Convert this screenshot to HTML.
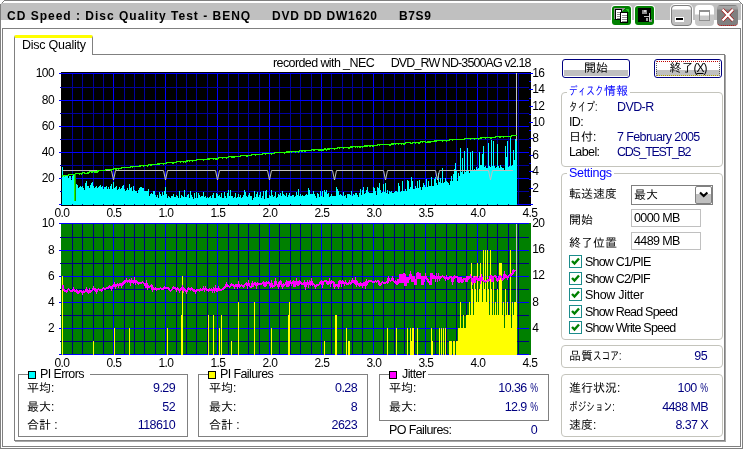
<!DOCTYPE html>
<html lang="ja">
<head>
<meta charset="utf-8">
<title>CD Speed : Disc Quality Test</title>
<style>
html,body{margin:0;padding:0;}
body{width:743px;height:449px;overflow:hidden;background:#fff;position:relative;
 font-family:"Liberation Sans","IPAGothic","Noto Sans CJK JP",sans-serif;font-size:12px;color:#000;}
.a{position:absolute;}
.g8{background:#808080;}
svg.charts{position:absolute;left:0;top:0;}
svg.charts text.ax{font-family:"Liberation Sans",sans-serif;font-size:12px;fill:#000;letter-spacing:-0.6px;}
.t{position:absolute;white-space:nowrap;line-height:14px;height:14px;}
.v{color:#000080;}
.l,.v{font-size:12.5px;letter-spacing:-0.6px;}
.r{text-align:right;}
.bl{color:#0000ff;}
.pc{display:inline-block;transform:scaleX(.7);transform-origin:100% 50%;margin-left:-2px;}
.k{display:inline-block;transform:scaleX(.72);transform-origin:0 50%;}
.gb{position:absolute;border:1px solid #c4c4bc;border-radius:4px;box-sizing:border-box;}
.sb{position:absolute;border:1px solid #808080;box-sizing:border-box;}
.lab{position:absolute;background:#fff;white-space:nowrap;line-height:10px;height:10px;}
.btn{position:absolute;box-sizing:border-box;border:1px solid #000080;border-radius:3px;background:#fff;text-align:center;line-height:16px;font-size:12px;}
.btn i{position:absolute;left:1px;right:1px;top:10px;height:6px;background:#c0c0c0;}
.btn span{position:relative;}
.inp{position:absolute;box-sizing:border-box;border:1px solid #c0c0c0;background:#fff;line-height:16px;padding-left:2px;font-size:12.5px;letter-spacing:-0.6px;}
.cb{position:absolute;width:13px;height:13px;box-sizing:border-box;border:1px solid #1c8c8c;background:#fff;}
.cb svg{position:absolute;left:1px;top:1px;}
.sq{position:absolute;width:8px;height:8px;box-sizing:border-box;border:1px solid #000;}
.t,.lab,.btn,.inp,svg.charts{will-change:transform;}
</style>
</head>
<body>
<!-- window frame -->
<div class="a g8" style="left:4px;top:0;width:735px;height:1px"></div>
<div class="a g8" style="left:0;top:4px;width:1px;height:445px"></div>
<div class="a g8" style="left:742px;top:4px;width:1px;height:445px"></div>
<div class="a g8" style="left:0;top:448px;width:743px;height:1px"></div>
<div class="a g8" style="left:3px;top:1px;width:1px;height:1px"></div>
<div class="a g8" style="left:2px;top:2px;width:1px;height:1px"></div>
<div class="a g8" style="left:1px;top:3px;width:1px;height:1px"></div>
<div class="a g8" style="left:739px;top:1px;width:1px;height:1px"></div>
<div class="a g8" style="left:740px;top:2px;width:1px;height:1px"></div>
<div class="a g8" style="left:741px;top:3px;width:1px;height:1px"></div>
<!-- title bar -->
<div class="a" style="left:1px;top:3px;width:740px;height:17px;background:#c0c0c0"></div>
<div class="t" style="left:6.5px;top:9px;font-weight:bold;font-size:12px;letter-spacing:1px">CD Speed : Disc Quality Test - BENQ</div>
<div class="t" style="left:271.5px;top:9px;font-weight:bold;font-size:12px;letter-spacing:0.75px">DVD DD DW1620</div>
<div class="t" style="left:398.8px;top:9px;font-weight:bold;font-size:12px;letter-spacing:0.6px">B7S9</div>
<!-- title buttons -->
<div class="a" style="left:612px;top:6px;width:19px;height:19px;background:#008000;border-radius:3px;box-shadow:0 0 0 1px #fff"></div>
<svg class="a" style="left:612px;top:6px" width="19" height="19" viewBox="0 0 19 19" shape-rendering="crispEdges"><path d="M2 2h12L2 13z" fill="#909090"/><path d="M13 3h4v3z" fill="#20c020"/><rect x="3.5" y="3.5" width="6" height="10" fill="#fff" stroke="#000"/><path d="M5 6h4M5 8h4M5 10h4M5 12h4" stroke="#909090"/><rect x="8.5" y="6.5" width="7" height="10" fill="#fff" stroke="#000"/><path d="M10 9h5M10 11h5M10 13h5M10 15h5" stroke="#909090"/></svg>
<div class="a" style="left:635px;top:6px;width:19px;height:19px;background:#008000;border-radius:3px;box-shadow:0 0 0 1px #fff"></div>
<svg class="a" style="left:635px;top:6px" width="19" height="19" viewBox="0 0 19 19" shape-rendering="crispEdges"><rect x="3" y="2" width="13" height="14" fill="#000"/><rect x="7" y="4" width="5" height="4" fill="#909090"/><rect x="9" y="4" width="2" height="2" fill="#d0d0d0"/><rect x="14" y="7" width="1" height="8" fill="#d0d0d0"/><rect x="9" y="10" width="5" height="1" fill="#c0c0c0"/><rect x="11" y="12" width="2" height="3" fill="#a0a0a0"/><path d="M13 16h4v-4z" fill="#909090"/></svg>
<div class="a" style="left:671px;top:5px;width:21px;height:21px;box-sizing:border-box;border:1px solid #808080;border-radius:4px;background:linear-gradient(#fff 0,#fff 3px,#c0c0c0 4px,#c0c0c0 100%);box-shadow:0 0 0 1px #fff"></div>
<div class="a" style="left:675px;top:17px;width:9px;height:5px;background:#fff"></div>
<div class="a" style="left:676px;top:18px;width:7px;height:2px;background:#000"></div>
<div class="a" style="left:695px;top:5px;width:19px;height:21px;border-radius:4px;background:linear-gradient(#fff 0,#fff 9px,#c8c8c8 10px,#c8c8c8 100%)"></div>
<div class="a" style="left:699px;top:10px;width:11px;height:11px;box-sizing:border-box;border:1px solid #909090;border-top:2px solid #909090;background:linear-gradient(#fff 0,#fff 3px,#c8c8c8 4px,#c8c8c8 100%)"></div>
<div class="a" style="left:717px;top:5px;width:21px;height:21px;box-sizing:border-box;border-radius:4px;background:linear-gradient(#808080 0,#808080 1px,#a8a8a8 1px,#a0a0a0 4px,#808080 5px,#808080 100%);border-bottom:1px dotted #c00000"></div>
<svg class="a" style="left:717px;top:5px" width="21" height="21" viewBox="0 0 21 21"><path d="M5.5 4.5L16 15.5M16 4.5L5.5 15.5" stroke="#a00000" stroke-width="3.4"/><path d="M5.5 4.5L16 15.5M16 4.5L5.5 15.5" stroke="#fff" stroke-width="2.4"/></svg>
<!-- inner frame -->
<div class="a" style="left:2px;top:28px;width:739px;height:419px;box-sizing:border-box;border:1px solid #808080"></div>
<!-- tab panel -->
<div class="a" style="left:14px;top:54px;width:711px;height:387px;box-sizing:border-box;border:1px solid #808080"></div>
<div class="a" style="left:725px;top:55px;width:1px;height:387px;background:#a8a8a8"></div>
<div class="a" style="left:15px;top:441px;width:711px;height:1px;background:#a8a8a8"></div>
<div class="a" style="left:14px;top:35px;width:79px;height:20px;box-sizing:border-box;background:#fff;border-left:1px solid #808080;border-right:1px solid #808080;border-top:3px solid #ffff00;border-radius:2px 2px 0 0"></div>
<div class="t l" style="left:22px;top:38px;letter-spacing:-0.25px">Disc Quality</div>
<div class="t l" style="left:273px;top:56px">recorded with _NEC</div>
<div class="t l r" style="left:380px;width:150.5px;top:56px;letter-spacing:-0.9px">DVD_RW ND-3500AG v2.18</div>
<svg class="charts" width="743" height="449" viewBox="0 0 743 449" shape-rendering="crispEdges"><rect x="61" y="72" width="470" height="134" fill="#000"/>
<rect x="72" y="73" width="1" height="132" fill="#00009c"/>
<rect x="82" y="73" width="1" height="132" fill="#00009c"/>
<rect x="93" y="73" width="1" height="132" fill="#00009c"/>
<rect x="103" y="73" width="1" height="132" fill="#00009c"/>
<rect x="113" y="73" width="1" height="132" fill="#0000ff"/>
<rect x="124" y="73" width="1" height="132" fill="#00009c"/>
<rect x="134" y="73" width="1" height="132" fill="#00009c"/>
<rect x="144" y="73" width="1" height="132" fill="#00009c"/>
<rect x="155" y="73" width="1" height="132" fill="#00009c"/>
<rect x="165" y="73" width="1" height="132" fill="#0000ff"/>
<rect x="176" y="73" width="1" height="132" fill="#00009c"/>
<rect x="186" y="73" width="1" height="132" fill="#00009c"/>
<rect x="196" y="73" width="1" height="132" fill="#00009c"/>
<rect x="207" y="73" width="1" height="132" fill="#00009c"/>
<rect x="217" y="73" width="1" height="132" fill="#0000ff"/>
<rect x="228" y="73" width="1" height="132" fill="#00009c"/>
<rect x="238" y="73" width="1" height="132" fill="#00009c"/>
<rect x="248" y="73" width="1" height="132" fill="#00009c"/>
<rect x="259" y="73" width="1" height="132" fill="#00009c"/>
<rect x="269" y="73" width="1" height="132" fill="#0000ff"/>
<rect x="279" y="73" width="1" height="132" fill="#00009c"/>
<rect x="290" y="73" width="1" height="132" fill="#00009c"/>
<rect x="300" y="73" width="1" height="132" fill="#00009c"/>
<rect x="311" y="73" width="1" height="132" fill="#00009c"/>
<rect x="321" y="73" width="1" height="132" fill="#0000ff"/>
<rect x="331" y="73" width="1" height="132" fill="#00009c"/>
<rect x="342" y="73" width="1" height="132" fill="#00009c"/>
<rect x="352" y="73" width="1" height="132" fill="#00009c"/>
<rect x="362" y="73" width="1" height="132" fill="#00009c"/>
<rect x="373" y="73" width="1" height="132" fill="#0000ff"/>
<rect x="383" y="73" width="1" height="132" fill="#00009c"/>
<rect x="394" y="73" width="1" height="132" fill="#00009c"/>
<rect x="404" y="73" width="1" height="132" fill="#00009c"/>
<rect x="414" y="73" width="1" height="132" fill="#00009c"/>
<rect x="425" y="73" width="1" height="132" fill="#0000ff"/>
<rect x="435" y="73" width="1" height="132" fill="#00009c"/>
<rect x="446" y="73" width="1" height="132" fill="#00009c"/>
<rect x="456" y="73" width="1" height="132" fill="#00009c"/>
<rect x="466" y="73" width="1" height="132" fill="#00009c"/>
<rect x="477" y="73" width="1" height="132" fill="#0000ff"/>
<rect x="487" y="73" width="1" height="132" fill="#00009c"/>
<rect x="497" y="73" width="1" height="132" fill="#00009c"/>
<rect x="508" y="73" width="1" height="132" fill="#00009c"/>
<rect x="518" y="73" width="1" height="132" fill="#00009c"/>
<rect x="59" y="73" width="470" height="1" fill="#0000ff"/>
<rect x="60" y="87" width="469" height="1" fill="#00009c"/>
<rect x="59" y="100" width="470" height="1" fill="#0000ff"/>
<rect x="60" y="113" width="469" height="1" fill="#00009c"/>
<rect x="59" y="126" width="470" height="1" fill="#0000ff"/>
<rect x="60" y="139" width="469" height="1" fill="#00009c"/>
<rect x="59" y="152" width="470" height="1" fill="#0000ff"/>
<rect x="60" y="165" width="469" height="1" fill="#00009c"/>
<rect x="59" y="178" width="470" height="1" fill="#0000ff"/>
<rect x="60" y="191" width="469" height="1" fill="#00009c"/>
<rect x="59" y="204" width="470" height="1" fill="#0000ff"/>
<rect x="59" y="204" width="474" height="1" fill="#0000ff"/>
<path d="M62,205 V167 h1 V176 h1 V176 h1 V176 h1 V176 h1 V176 h1 V178 h1 V176 h1 V176 h1 V180 h1 V176 h1 V175 h1 V176 h1 V176 h1 V184 h1 V185 h1 V188 h1 V187 h1 V186 h1 V187 h1 V186 h1 V188 h1 V190 h1 V183 h1 V181 h1 V186 h1 V186 h1 V188 h1 V185 h1 V183 h1 V182 h1 V186 h1 V188 h1 V187 h1 V186 h1 V188 h1 V187 h1 V186 h1 V185 h1 V187 h1 V186 h1 V189 h1 V187 h1 V187 h1 V186 h1 V189 h1 V187 h1 V189 h1 V186 h1 V184 h1 V189 h1 V182 h1 V188 h1 V187 h1 V186 h1 V190 h1 V189 h1 V187 h1 V189 h1 V188 h1 V186 h1 V185 h1 V189 h1 V191 h1 V190 h1 V188 h1 V190 h1 V184 h1 V188 h1 V187 h1 V191 h1 V186 h1 V190 h1 V191 h1 V191 h1 V193 h1 V190 h1 V188 h1 V187 h1 V187 h1 V188 h1 V188 h1 V191 h1 V191 h1 V191 h1 V191 h1 V189 h1 V196 h1 V194 h1 V193 h1 V194 h1 V191 h1 V191 h1 V195 h1 V197 h1 V195 h1 V198 h1 V192 h1 V194 h1 V196 h1 V192 h1 V195 h1 V191 h1 V187 h1 V194 h1 V198 h1 V196 h1 V197 h1 V198 h1 V196 h1 V196 h1 V194 h1 V197 h1 V197 h1 V195 h1 V196 h1 V198 h1 V191 h1 V198 h1 V195 h1 V196 h1 V197 h1 V190 h1 V197 h1 V197 h1 V195 h1 V194 h1 V198 h1 V191 h1 V195 h1 V197 h1 V199 h1 V193 h1 V198 h1 V192 h1 V198 h1 V193 h1 V195 h1 V197 h1 V196 h1 V196 h1 V192 h1 V197 h1 V196 h1 V198 h1 V197 h1 V198 h1 V197 h1 V196 h1 V198 h1 V195 h1 V193 h1 V198 h1 V198 h1 V193 h1 V194 h1 V196 h1 V195 h1 V197 h1 V193 h1 V198 h1 V198 h1 V192 h1 V196 h1 V198 h1 V193 h1 V190 h1 V196 h1 V190 h1 V196 h1 V196 h1 V198 h1 V197 h1 V193 h1 V198 h1 V197 h1 V194 h1 V197 h1 V195 h1 V198 h1 V197 h1 V195 h1 V190 h1 V192 h1 V196 h1 V197 h1 V195 h1 V193 h1 V196 h1 V196 h1 V200 h1 V198 h1 V191 h1 V197 h1 V194 h1 V192 h1 V197 h1 V195 h1 V192 h1 V198 h1 V196 h1 V191 h1 V199 h1 V191 h1 V190 h1 V198 h1 V198 h1 V195 h1 V196 h1 V190 h1 V195 h1 V197 h1 V196 h1 V192 h1 V198 h1 V197 h1 V194 h1 V195 h1 V193 h1 V196 h1 V191 h1 V194 h1 V195 h1 V196 h1 V193 h1 V197 h1 V195 h1 V193 h1 V196 h1 V196 h1 V195 h1 V195 h1 V197 h1 V196 h1 V192 h1 V195 h1 V189 h1 V196 h1 V194 h1 V196 h1 V195 h1 V196 h1 V196 h1 V195 h1 V194 h1 V195 h1 V188 h1 V190 h1 V194 h1 V194 h1 V194 h1 V191 h1 V194 h1 V196 h1 V198 h1 V193 h1 V194 h1 V197 h1 V191 h1 V196 h1 V191 h1 V197 h1 V190 h1 V192 h1 V190 h1 V194 h1 V193 h1 V197 h1 V196 h1 V194 h1 V196 h1 V196 h1 V196 h1 V196 h1 V187 h1 V189 h1 V191 h1 V195 h1 V194 h1 V195 h1 V196 h1 V192 h1 V196 h1 V195 h1 V198 h1 V194 h1 V194 h1 V194 h1 V195 h1 V191 h1 V196 h1 V194 h1 V195 h1 V193 h1 V193 h1 V195 h1 V197 h1 V193 h1 V189 h1 V195 h1 V190 h1 V187 h1 V194 h1 V193 h1 V190 h1 V187 h1 V192 h1 V193 h1 V193 h1 V193 h1 V193 h1 V187 h1 V188 h1 V191 h1 V195 h1 V187 h1 V188 h1 V183 h1 V190 h1 V193 h1 V192 h1 V184 h1 V192 h1 V183 h1 V193 h1 V190 h1 V194 h1 V191 h1 V192 h1 V191 h1 V193 h1 V193 h1 V192 h1 V191 h1 V191 h1 V192 h1 V183 h1 V186 h1 V192 h1 V191 h1 V181 h1 V191 h1 V191 h1 V189 h1 V191 h1 V180 h1 V181 h1 V189 h1 V187 h1 V177 h1 V181 h1 V189 h1 V189 h1 V186 h1 V188 h1 V181 h1 V188 h1 V180 h1 V187 h1 V190 h1 V187 h1 V183 h1 V185 h1 V187 h1 V179 h1 V187 h1 V181 h1 V186 h1 V186 h1 V177 h1 V186 h1 V186 h1 V179 h1 V177 h1 V183 h1 V185 h1 V173 h1 V182 h1 V178 h1 V183 h1 V168 h1 V183 h1 V182 h1 V178 h1 V181 h1 V182 h1 V183 h1 V185 h1 V181 h1 V176 h1 V181 h1 V174 h1 V169 h1 V163 h1 V170 h1 V181 h1 V173 h1 V176 h1 V148 h1 V172 h1 V158 h1 V174 h1 V151 h1 V172 h1 V171 h1 V148 h1 V170 h1 V173 h1 V152 h1 V170 h1 V151 h1 V170 h1 V169 h1 V170 h1 V167 h1 V169 h1 V168 h1 V152 h1 V165 h1 V165 h1 V154 h1 V146 h1 V167 h1 V166 h1 V168 h1 V168 h1 V143 h1 V166 h1 V167 h1 V140 h1 V166 h1 V141 h1 V166 h1 V168 h1 V167 h1 V144 h1 V166 h1 V168 h1 V165 h1 V167 h1 V168 h1 V168 h1 V170 h1 V146 h1 V157 h1 V141 h1 V167 h1 V166 h1 V136 h1 V166 h1 V165 h1 V150 h1 V160 h1 V139 h1 V139 h1 V205 Z" fill="#00ffff"/>
<rect x="72" y="204" width="1" height="1" fill="#00009c"/>
<rect x="82" y="204" width="1" height="1" fill="#00009c"/>
<rect x="93" y="204" width="1" height="1" fill="#00009c"/>
<rect x="103" y="204" width="1" height="1" fill="#00009c"/>
<rect x="113" y="204" width="1" height="1" fill="#00009c"/>
<rect x="124" y="204" width="1" height="1" fill="#00009c"/>
<rect x="134" y="204" width="1" height="1" fill="#00009c"/>
<rect x="144" y="204" width="1" height="1" fill="#00009c"/>
<rect x="155" y="204" width="1" height="1" fill="#00009c"/>
<rect x="165" y="204" width="1" height="1" fill="#00009c"/>
<rect x="176" y="204" width="1" height="1" fill="#00009c"/>
<rect x="186" y="204" width="1" height="1" fill="#00009c"/>
<rect x="196" y="204" width="1" height="1" fill="#00009c"/>
<rect x="207" y="204" width="1" height="1" fill="#00009c"/>
<rect x="217" y="204" width="1" height="1" fill="#00009c"/>
<rect x="228" y="204" width="1" height="1" fill="#00009c"/>
<rect x="238" y="204" width="1" height="1" fill="#00009c"/>
<rect x="248" y="204" width="1" height="1" fill="#00009c"/>
<rect x="259" y="204" width="1" height="1" fill="#00009c"/>
<rect x="269" y="204" width="1" height="1" fill="#00009c"/>
<rect x="279" y="204" width="1" height="1" fill="#00009c"/>
<rect x="290" y="204" width="1" height="1" fill="#00009c"/>
<rect x="300" y="204" width="1" height="1" fill="#00009c"/>
<rect x="311" y="204" width="1" height="1" fill="#00009c"/>
<rect x="321" y="204" width="1" height="1" fill="#00009c"/>
<rect x="331" y="204" width="1" height="1" fill="#00009c"/>
<rect x="342" y="204" width="1" height="1" fill="#00009c"/>
<rect x="352" y="204" width="1" height="1" fill="#00009c"/>
<rect x="362" y="204" width="1" height="1" fill="#00009c"/>
<rect x="373" y="204" width="1" height="1" fill="#00009c"/>
<rect x="383" y="204" width="1" height="1" fill="#00009c"/>
<rect x="394" y="204" width="1" height="1" fill="#00009c"/>
<rect x="404" y="204" width="1" height="1" fill="#00009c"/>
<rect x="414" y="204" width="1" height="1" fill="#00009c"/>
<rect x="425" y="204" width="1" height="1" fill="#00009c"/>
<rect x="435" y="204" width="1" height="1" fill="#00009c"/>
<rect x="446" y="204" width="1" height="1" fill="#00009c"/>
<rect x="456" y="204" width="1" height="1" fill="#00009c"/>
<rect x="466" y="204" width="1" height="1" fill="#00009c"/>
<rect x="477" y="204" width="1" height="1" fill="#00009c"/>
<rect x="487" y="204" width="1" height="1" fill="#00009c"/>
<rect x="497" y="204" width="1" height="1" fill="#00009c"/>
<rect x="508" y="204" width="1" height="1" fill="#00009c"/>
<path d="M62.5,170.5 L111.5,170.5 L113.5,180 L115.5,170.5 L163.5,170.5 L165.5,180 L167.5,170.5 L215.5,170.5 L217.5,180 L219.5,170.5 L267.5,170.5 L269.5,180 L271.5,170.5 L332.5,170.5 L334.5,180 L336.5,170.5 L383.5,170.5 L385.5,180 L387.5,170.5 L435.5,170.5 L437.5,180 L439.5,170.5 L488.5,170.5 L490.5,180 L492.5,170.5 L513,170.5" fill="none" stroke="#c0c0c0" stroke-width="1" shape-rendering="auto"/>
<rect x="516" y="73" width="1" height="68" fill="#c0c0c0"/>
<rect x="62" y="175" width="1" height="1" fill="#20ff00"/>
<rect x="62" y="176" width="1" height="1" fill="#20ff00"/>
<rect x="63" y="175" width="1" height="1" fill="#20ff00"/>
<rect x="64" y="175" width="1" height="1" fill="#20ff00"/>
<rect x="64" y="176" width="1" height="1" fill="#20ff00"/>
<rect x="65" y="175" width="1" height="1" fill="#20ff00"/>
<rect x="66" y="175" width="1" height="1" fill="#20ff00"/>
<rect x="67" y="175" width="1" height="1" fill="#20ff00"/>
<rect x="68" y="174" width="1" height="2" fill="#20ff00"/>
<rect x="69" y="174" width="1" height="1" fill="#20ff00"/>
<rect x="70" y="174" width="1" height="1" fill="#20ff00"/>
<rect x="71" y="174" width="1" height="1" fill="#20ff00"/>
<rect x="72" y="174" width="1" height="1" fill="#20ff00"/>
<rect x="73" y="174" width="1" height="1" fill="#20ff00"/>
<rect x="74" y="174" width="1" height="1" fill="#20ff00"/>
<rect x="75" y="173" width="1" height="2" fill="#20ff00"/>
<rect x="76" y="173" width="1" height="1" fill="#20ff00"/>
<rect x="77" y="173" width="1" height="1" fill="#20ff00"/>
<rect x="78" y="173" width="1" height="1" fill="#20ff00"/>
<rect x="79" y="173" width="1" height="1" fill="#20ff00"/>
<rect x="79" y="174" width="1" height="1" fill="#20ff00"/>
<rect x="80" y="173" width="1" height="1" fill="#20ff00"/>
<rect x="81" y="173" width="1" height="1" fill="#20ff00"/>
<rect x="81" y="174" width="1" height="1" fill="#20ff00"/>
<rect x="82" y="172" width="1" height="2" fill="#20ff00"/>
<rect x="82" y="173" width="1" height="1" fill="#20ff00"/>
<rect x="83" y="172" width="1" height="1" fill="#20ff00"/>
<rect x="84" y="172" width="1" height="2" fill="#20ff00"/>
<rect x="85" y="173" width="1" height="1" fill="#20ff00"/>
<rect x="86" y="173" width="1" height="1" fill="#20ff00"/>
<rect x="87" y="172" width="1" height="2" fill="#20ff00"/>
<rect x="88" y="172" width="1" height="1" fill="#20ff00"/>
<rect x="88" y="173" width="1" height="1" fill="#20ff00"/>
<rect x="89" y="171" width="1" height="2" fill="#20ff00"/>
<rect x="89" y="172" width="1" height="1" fill="#20ff00"/>
<rect x="90" y="171" width="1" height="1" fill="#20ff00"/>
<rect x="91" y="171" width="1" height="2" fill="#20ff00"/>
<rect x="92" y="171" width="1" height="2" fill="#20ff00"/>
<rect x="93" y="171" width="1" height="1" fill="#20ff00"/>
<rect x="94" y="171" width="1" height="1" fill="#20ff00"/>
<rect x="94" y="172" width="1" height="1" fill="#20ff00"/>
<rect x="95" y="171" width="1" height="1" fill="#20ff00"/>
<rect x="95" y="172" width="1" height="1" fill="#20ff00"/>
<rect x="96" y="171" width="1" height="2" fill="#20ff00"/>
<rect x="97" y="170" width="1" height="3" fill="#20ff00"/>
<rect x="98" y="170" width="1" height="1" fill="#20ff00"/>
<rect x="98" y="171" width="1" height="1" fill="#20ff00"/>
<rect x="99" y="170" width="1" height="1" fill="#20ff00"/>
<rect x="100" y="170" width="1" height="1" fill="#20ff00"/>
<rect x="101" y="170" width="1" height="1" fill="#20ff00"/>
<rect x="102" y="170" width="1" height="1" fill="#20ff00"/>
<rect x="103" y="170" width="1" height="1" fill="#20ff00"/>
<rect x="104" y="170" width="1" height="1" fill="#20ff00"/>
<rect x="105" y="169" width="1" height="2" fill="#20ff00"/>
<rect x="106" y="169" width="1" height="1" fill="#20ff00"/>
<rect x="107" y="169" width="1" height="1" fill="#20ff00"/>
<rect x="108" y="169" width="1" height="1" fill="#20ff00"/>
<rect x="109" y="169" width="1" height="1" fill="#20ff00"/>
<rect x="110" y="169" width="1" height="2" fill="#20ff00"/>
<rect x="111" y="169" width="1" height="2" fill="#20ff00"/>
<rect x="112" y="169" width="1" height="1" fill="#20ff00"/>
<rect x="113" y="168" width="1" height="2" fill="#20ff00"/>
<rect x="114" y="168" width="1" height="1" fill="#20ff00"/>
<rect x="115" y="168" width="1" height="2" fill="#20ff00"/>
<rect x="115" y="169" width="1" height="1" fill="#20ff00"/>
<rect x="116" y="168" width="1" height="2" fill="#20ff00"/>
<rect x="117" y="168" width="1" height="1" fill="#20ff00"/>
<rect x="118" y="168" width="1" height="1" fill="#20ff00"/>
<rect x="118" y="169" width="1" height="1" fill="#20ff00"/>
<rect x="119" y="168" width="1" height="1" fill="#20ff00"/>
<rect x="120" y="168" width="1" height="1" fill="#20ff00"/>
<rect x="121" y="167" width="1" height="2" fill="#20ff00"/>
<rect x="122" y="167" width="1" height="1" fill="#20ff00"/>
<rect x="123" y="167" width="1" height="1" fill="#20ff00"/>
<rect x="124" y="167" width="1" height="1" fill="#20ff00"/>
<rect x="125" y="167" width="1" height="1" fill="#20ff00"/>
<rect x="126" y="167" width="1" height="1" fill="#20ff00"/>
<rect x="127" y="167" width="1" height="1" fill="#20ff00"/>
<rect x="128" y="167" width="1" height="1" fill="#20ff00"/>
<rect x="129" y="167" width="1" height="1" fill="#20ff00"/>
<rect x="130" y="166" width="1" height="2" fill="#20ff00"/>
<rect x="130" y="167" width="1" height="1" fill="#20ff00"/>
<rect x="131" y="166" width="1" height="1" fill="#20ff00"/>
<rect x="132" y="166" width="1" height="1" fill="#20ff00"/>
<rect x="132" y="167" width="1" height="1" fill="#20ff00"/>
<rect x="133" y="166" width="1" height="1" fill="#20ff00"/>
<rect x="134" y="166" width="1" height="1" fill="#20ff00"/>
<rect x="135" y="166" width="1" height="1" fill="#20ff00"/>
<rect x="136" y="166" width="1" height="1" fill="#20ff00"/>
<rect x="137" y="166" width="1" height="1" fill="#20ff00"/>
<rect x="138" y="166" width="1" height="1" fill="#20ff00"/>
<rect x="139" y="165" width="1" height="2" fill="#20ff00"/>
<rect x="140" y="165" width="1" height="1" fill="#20ff00"/>
<rect x="140" y="166" width="1" height="1" fill="#20ff00"/>
<rect x="141" y="165" width="1" height="1" fill="#20ff00"/>
<rect x="142" y="165" width="1" height="1" fill="#20ff00"/>
<rect x="143" y="165" width="1" height="1" fill="#20ff00"/>
<rect x="143" y="166" width="1" height="1" fill="#20ff00"/>
<rect x="144" y="165" width="1" height="1" fill="#20ff00"/>
<rect x="145" y="165" width="1" height="1" fill="#20ff00"/>
<rect x="146" y="165" width="1" height="1" fill="#20ff00"/>
<rect x="147" y="165" width="1" height="1" fill="#20ff00"/>
<rect x="147" y="166" width="1" height="1" fill="#20ff00"/>
<rect x="148" y="164" width="1" height="2" fill="#20ff00"/>
<rect x="149" y="164" width="1" height="1" fill="#20ff00"/>
<rect x="150" y="164" width="1" height="2" fill="#20ff00"/>
<rect x="151" y="164" width="1" height="2" fill="#20ff00"/>
<rect x="152" y="164" width="1" height="1" fill="#20ff00"/>
<rect x="153" y="164" width="1" height="1" fill="#20ff00"/>
<rect x="154" y="164" width="1" height="1" fill="#20ff00"/>
<rect x="155" y="164" width="1" height="1" fill="#20ff00"/>
<rect x="156" y="164" width="1" height="1" fill="#20ff00"/>
<rect x="157" y="163" width="1" height="2" fill="#20ff00"/>
<rect x="158" y="163" width="1" height="2" fill="#20ff00"/>
<rect x="159" y="163" width="1" height="2" fill="#20ff00"/>
<rect x="160" y="163" width="1" height="1" fill="#20ff00"/>
<rect x="161" y="163" width="1" height="1" fill="#20ff00"/>
<rect x="162" y="163" width="1" height="1" fill="#20ff00"/>
<rect x="163" y="163" width="1" height="1" fill="#20ff00"/>
<rect x="163" y="164" width="1" height="1" fill="#20ff00"/>
<rect x="164" y="163" width="1" height="1" fill="#20ff00"/>
<rect x="165" y="163" width="1" height="1" fill="#20ff00"/>
<rect x="166" y="162" width="1" height="2" fill="#20ff00"/>
<rect x="166" y="163" width="1" height="1" fill="#20ff00"/>
<rect x="167" y="162" width="1" height="1" fill="#20ff00"/>
<rect x="168" y="162" width="1" height="1" fill="#20ff00"/>
<rect x="169" y="162" width="1" height="1" fill="#20ff00"/>
<rect x="170" y="162" width="1" height="1" fill="#20ff00"/>
<rect x="171" y="162" width="1" height="1" fill="#20ff00"/>
<rect x="172" y="162" width="1" height="1" fill="#20ff00"/>
<rect x="172" y="163" width="1" height="1" fill="#20ff00"/>
<rect x="173" y="162" width="1" height="1" fill="#20ff00"/>
<rect x="173" y="163" width="1" height="1" fill="#20ff00"/>
<rect x="174" y="162" width="1" height="1" fill="#20ff00"/>
<rect x="175" y="162" width="1" height="1" fill="#20ff00"/>
<rect x="176" y="161" width="1" height="2" fill="#20ff00"/>
<rect x="177" y="161" width="1" height="1" fill="#20ff00"/>
<rect x="178" y="161" width="1" height="1" fill="#20ff00"/>
<rect x="179" y="161" width="1" height="1" fill="#20ff00"/>
<rect x="180" y="161" width="1" height="1" fill="#20ff00"/>
<rect x="180" y="162" width="1" height="1" fill="#20ff00"/>
<rect x="181" y="161" width="1" height="1" fill="#20ff00"/>
<rect x="182" y="161" width="1" height="1" fill="#20ff00"/>
<rect x="183" y="161" width="1" height="1" fill="#20ff00"/>
<rect x="183" y="162" width="1" height="1" fill="#20ff00"/>
<rect x="184" y="161" width="1" height="1" fill="#20ff00"/>
<rect x="185" y="161" width="1" height="1" fill="#20ff00"/>
<rect x="185" y="162" width="1" height="1" fill="#20ff00"/>
<rect x="186" y="160" width="1" height="2" fill="#20ff00"/>
<rect x="187" y="160" width="1" height="1" fill="#20ff00"/>
<rect x="187" y="161" width="1" height="1" fill="#20ff00"/>
<rect x="188" y="160" width="1" height="1" fill="#20ff00"/>
<rect x="189" y="160" width="1" height="1" fill="#20ff00"/>
<rect x="189" y="161" width="1" height="1" fill="#20ff00"/>
<rect x="190" y="160" width="1" height="1" fill="#20ff00"/>
<rect x="191" y="160" width="1" height="1" fill="#20ff00"/>
<rect x="192" y="160" width="1" height="1" fill="#20ff00"/>
<rect x="192" y="161" width="1" height="1" fill="#20ff00"/>
<rect x="193" y="160" width="1" height="1" fill="#20ff00"/>
<rect x="194" y="160" width="1" height="1" fill="#20ff00"/>
<rect x="195" y="160" width="1" height="1" fill="#20ff00"/>
<rect x="196" y="159" width="1" height="2" fill="#20ff00"/>
<rect x="197" y="159" width="1" height="1" fill="#20ff00"/>
<rect x="198" y="159" width="1" height="1" fill="#20ff00"/>
<rect x="199" y="159" width="1" height="1" fill="#20ff00"/>
<rect x="200" y="159" width="1" height="1" fill="#20ff00"/>
<rect x="201" y="159" width="1" height="1" fill="#20ff00"/>
<rect x="202" y="159" width="1" height="1" fill="#20ff00"/>
<rect x="203" y="159" width="1" height="1" fill="#20ff00"/>
<rect x="203" y="160" width="1" height="1" fill="#20ff00"/>
<rect x="204" y="159" width="1" height="1" fill="#20ff00"/>
<rect x="205" y="159" width="1" height="1" fill="#20ff00"/>
<rect x="206" y="159" width="1" height="1" fill="#20ff00"/>
<rect x="207" y="158" width="1" height="2" fill="#20ff00"/>
<rect x="208" y="158" width="1" height="2" fill="#20ff00"/>
<rect x="208" y="159" width="1" height="1" fill="#20ff00"/>
<rect x="209" y="158" width="1" height="2" fill="#20ff00"/>
<rect x="210" y="158" width="1" height="1" fill="#20ff00"/>
<rect x="211" y="158" width="1" height="1" fill="#20ff00"/>
<rect x="212" y="158" width="1" height="1" fill="#20ff00"/>
<rect x="213" y="158" width="1" height="1" fill="#20ff00"/>
<rect x="213" y="159" width="1" height="1" fill="#20ff00"/>
<rect x="214" y="158" width="1" height="1" fill="#20ff00"/>
<rect x="215" y="158" width="1" height="2" fill="#20ff00"/>
<rect x="215" y="159" width="1" height="1" fill="#20ff00"/>
<rect x="216" y="158" width="1" height="2" fill="#20ff00"/>
<rect x="217" y="158" width="1" height="1" fill="#20ff00"/>
<rect x="217" y="159" width="1" height="1" fill="#20ff00"/>
<rect x="218" y="157" width="1" height="2" fill="#20ff00"/>
<rect x="219" y="157" width="1" height="1" fill="#20ff00"/>
<rect x="220" y="157" width="1" height="1" fill="#20ff00"/>
<rect x="221" y="157" width="1" height="1" fill="#20ff00"/>
<rect x="222" y="157" width="1" height="1" fill="#20ff00"/>
<rect x="222" y="158" width="1" height="1" fill="#20ff00"/>
<rect x="223" y="157" width="1" height="1" fill="#20ff00"/>
<rect x="224" y="157" width="1" height="1" fill="#20ff00"/>
<rect x="225" y="157" width="1" height="1" fill="#20ff00"/>
<rect x="226" y="157" width="1" height="1" fill="#20ff00"/>
<rect x="226" y="158" width="1" height="1" fill="#20ff00"/>
<rect x="227" y="157" width="1" height="1" fill="#20ff00"/>
<rect x="228" y="156" width="1" height="2" fill="#20ff00"/>
<rect x="228" y="157" width="1" height="1" fill="#20ff00"/>
<rect x="229" y="156" width="1" height="1" fill="#20ff00"/>
<rect x="230" y="156" width="1" height="1" fill="#20ff00"/>
<rect x="231" y="156" width="1" height="1" fill="#20ff00"/>
<rect x="231" y="157" width="1" height="1" fill="#20ff00"/>
<rect x="232" y="156" width="1" height="2" fill="#20ff00"/>
<rect x="233" y="156" width="1" height="2" fill="#20ff00"/>
<rect x="234" y="156" width="1" height="1" fill="#20ff00"/>
<rect x="234" y="157" width="1" height="1" fill="#20ff00"/>
<rect x="235" y="156" width="1" height="1" fill="#20ff00"/>
<rect x="236" y="156" width="1" height="1" fill="#20ff00"/>
<rect x="237" y="156" width="1" height="1" fill="#20ff00"/>
<rect x="238" y="156" width="1" height="1" fill="#20ff00"/>
<rect x="239" y="156" width="1" height="1" fill="#20ff00"/>
<rect x="240" y="155" width="1" height="2" fill="#20ff00"/>
<rect x="241" y="155" width="1" height="1" fill="#20ff00"/>
<rect x="242" y="155" width="1" height="1" fill="#20ff00"/>
<rect x="243" y="155" width="1" height="1" fill="#20ff00"/>
<rect x="244" y="155" width="1" height="1" fill="#20ff00"/>
<rect x="245" y="155" width="1" height="1" fill="#20ff00"/>
<rect x="246" y="155" width="1" height="2" fill="#20ff00"/>
<rect x="247" y="155" width="1" height="2" fill="#20ff00"/>
<rect x="248" y="155" width="1" height="1" fill="#20ff00"/>
<rect x="249" y="155" width="1" height="1" fill="#20ff00"/>
<rect x="250" y="155" width="1" height="1" fill="#20ff00"/>
<rect x="251" y="154" width="1" height="2" fill="#20ff00"/>
<rect x="252" y="154" width="1" height="1" fill="#20ff00"/>
<rect x="253" y="154" width="1" height="1" fill="#20ff00"/>
<rect x="254" y="154" width="1" height="1" fill="#20ff00"/>
<rect x="255" y="154" width="1" height="1" fill="#20ff00"/>
<rect x="255" y="155" width="1" height="1" fill="#20ff00"/>
<rect x="256" y="154" width="1" height="1" fill="#20ff00"/>
<rect x="257" y="154" width="1" height="1" fill="#20ff00"/>
<rect x="258" y="154" width="1" height="1" fill="#20ff00"/>
<rect x="259" y="154" width="1" height="1" fill="#20ff00"/>
<rect x="260" y="154" width="1" height="1" fill="#20ff00"/>
<rect x="261" y="154" width="1" height="1" fill="#20ff00"/>
<rect x="262" y="153" width="1" height="2" fill="#20ff00"/>
<rect x="263" y="153" width="1" height="1" fill="#20ff00"/>
<rect x="264" y="153" width="1" height="1" fill="#20ff00"/>
<rect x="265" y="153" width="1" height="1" fill="#20ff00"/>
<rect x="265" y="154" width="1" height="1" fill="#20ff00"/>
<rect x="266" y="153" width="1" height="1" fill="#20ff00"/>
<rect x="267" y="153" width="1" height="1" fill="#20ff00"/>
<rect x="268" y="153" width="1" height="1" fill="#20ff00"/>
<rect x="269" y="153" width="1" height="1" fill="#20ff00"/>
<rect x="270" y="153" width="1" height="1" fill="#20ff00"/>
<rect x="271" y="153" width="1" height="1" fill="#20ff00"/>
<rect x="271" y="154" width="1" height="1" fill="#20ff00"/>
<rect x="272" y="153" width="1" height="1" fill="#20ff00"/>
<rect x="273" y="153" width="1" height="1" fill="#20ff00"/>
<rect x="274" y="152" width="1" height="2" fill="#20ff00"/>
<rect x="275" y="152" width="1" height="1" fill="#20ff00"/>
<rect x="276" y="152" width="1" height="1" fill="#20ff00"/>
<rect x="277" y="152" width="1" height="1" fill="#20ff00"/>
<rect x="278" y="152" width="1" height="1" fill="#20ff00"/>
<rect x="279" y="152" width="1" height="1" fill="#20ff00"/>
<rect x="280" y="152" width="1" height="1" fill="#20ff00"/>
<rect x="281" y="152" width="1" height="1" fill="#20ff00"/>
<rect x="282" y="152" width="1" height="1" fill="#20ff00"/>
<rect x="283" y="152" width="1" height="1" fill="#20ff00"/>
<rect x="284" y="152" width="1" height="1" fill="#20ff00"/>
<rect x="284" y="153" width="1" height="1" fill="#20ff00"/>
<rect x="285" y="152" width="1" height="1" fill="#20ff00"/>
<rect x="286" y="151" width="1" height="2" fill="#20ff00"/>
<rect x="286" y="152" width="1" height="1" fill="#20ff00"/>
<rect x="287" y="151" width="1" height="2" fill="#20ff00"/>
<rect x="288" y="151" width="1" height="2" fill="#20ff00"/>
<rect x="288" y="152" width="1" height="1" fill="#20ff00"/>
<rect x="289" y="151" width="1" height="1" fill="#20ff00"/>
<rect x="289" y="152" width="1" height="1" fill="#20ff00"/>
<rect x="290" y="151" width="1" height="1" fill="#20ff00"/>
<rect x="291" y="151" width="1" height="1" fill="#20ff00"/>
<rect x="291" y="152" width="1" height="1" fill="#20ff00"/>
<rect x="292" y="151" width="1" height="1" fill="#20ff00"/>
<rect x="293" y="151" width="1" height="1" fill="#20ff00"/>
<rect x="294" y="151" width="1" height="1" fill="#20ff00"/>
<rect x="295" y="151" width="1" height="1" fill="#20ff00"/>
<rect x="295" y="152" width="1" height="1" fill="#20ff00"/>
<rect x="296" y="151" width="1" height="1" fill="#20ff00"/>
<rect x="297" y="151" width="1" height="1" fill="#20ff00"/>
<rect x="298" y="151" width="1" height="1" fill="#20ff00"/>
<rect x="298" y="152" width="1" height="1" fill="#20ff00"/>
<rect x="299" y="150" width="1" height="2" fill="#20ff00"/>
<rect x="300" y="150" width="1" height="1" fill="#20ff00"/>
<rect x="301" y="150" width="1" height="1" fill="#20ff00"/>
<rect x="301" y="151" width="1" height="1" fill="#20ff00"/>
<rect x="302" y="150" width="1" height="1" fill="#20ff00"/>
<rect x="302" y="151" width="1" height="1" fill="#20ff00"/>
<rect x="303" y="150" width="1" height="1" fill="#20ff00"/>
<rect x="304" y="150" width="1" height="2" fill="#20ff00"/>
<rect x="305" y="150" width="1" height="2" fill="#20ff00"/>
<rect x="306" y="150" width="1" height="1" fill="#20ff00"/>
<rect x="307" y="150" width="1" height="1" fill="#20ff00"/>
<rect x="308" y="150" width="1" height="1" fill="#20ff00"/>
<rect x="309" y="150" width="1" height="1" fill="#20ff00"/>
<rect x="310" y="150" width="1" height="1" fill="#20ff00"/>
<rect x="311" y="149" width="1" height="2" fill="#20ff00"/>
<rect x="312" y="149" width="1" height="1" fill="#20ff00"/>
<rect x="313" y="149" width="1" height="2" fill="#20ff00"/>
<rect x="313" y="150" width="1" height="1" fill="#20ff00"/>
<rect x="314" y="149" width="1" height="2" fill="#20ff00"/>
<rect x="315" y="149" width="1" height="1" fill="#20ff00"/>
<rect x="316" y="149" width="1" height="1" fill="#20ff00"/>
<rect x="317" y="149" width="1" height="1" fill="#20ff00"/>
<rect x="318" y="149" width="1" height="2" fill="#20ff00"/>
<rect x="319" y="149" width="1" height="2" fill="#20ff00"/>
<rect x="320" y="149" width="1" height="1" fill="#20ff00"/>
<rect x="320" y="150" width="1" height="1" fill="#20ff00"/>
<rect x="321" y="149" width="1" height="2" fill="#20ff00"/>
<rect x="321" y="150" width="1" height="1" fill="#20ff00"/>
<rect x="322" y="149" width="1" height="2" fill="#20ff00"/>
<rect x="323" y="149" width="1" height="1" fill="#20ff00"/>
<rect x="323" y="150" width="1" height="1" fill="#20ff00"/>
<rect x="324" y="148" width="1" height="2" fill="#20ff00"/>
<rect x="324" y="149" width="1" height="1" fill="#20ff00"/>
<rect x="325" y="148" width="1" height="2" fill="#20ff00"/>
<rect x="326" y="149" width="1" height="1" fill="#20ff00"/>
<rect x="326" y="150" width="1" height="1" fill="#20ff00"/>
<rect x="327" y="148" width="1" height="2" fill="#20ff00"/>
<rect x="328" y="148" width="1" height="1" fill="#20ff00"/>
<rect x="328" y="149" width="1" height="1" fill="#20ff00"/>
<rect x="329" y="148" width="1" height="1" fill="#20ff00"/>
<rect x="329" y="149" width="1" height="1" fill="#20ff00"/>
<rect x="330" y="148" width="1" height="1" fill="#20ff00"/>
<rect x="331" y="148" width="1" height="1" fill="#20ff00"/>
<rect x="332" y="148" width="1" height="1" fill="#20ff00"/>
<rect x="333" y="148" width="1" height="1" fill="#20ff00"/>
<rect x="334" y="148" width="1" height="1" fill="#20ff00"/>
<rect x="334" y="149" width="1" height="1" fill="#20ff00"/>
<rect x="335" y="148" width="1" height="1" fill="#20ff00"/>
<rect x="336" y="148" width="1" height="1" fill="#20ff00"/>
<rect x="337" y="147" width="1" height="2" fill="#20ff00"/>
<rect x="337" y="148" width="1" height="1" fill="#20ff00"/>
<rect x="338" y="147" width="1" height="1" fill="#20ff00"/>
<rect x="339" y="147" width="1" height="1" fill="#20ff00"/>
<rect x="339" y="148" width="1" height="1" fill="#20ff00"/>
<rect x="340" y="147" width="1" height="1" fill="#20ff00"/>
<rect x="341" y="147" width="1" height="1" fill="#20ff00"/>
<rect x="342" y="147" width="1" height="1" fill="#20ff00"/>
<rect x="343" y="147" width="1" height="1" fill="#20ff00"/>
<rect x="343" y="148" width="1" height="1" fill="#20ff00"/>
<rect x="344" y="147" width="1" height="1" fill="#20ff00"/>
<rect x="345" y="147" width="1" height="1" fill="#20ff00"/>
<rect x="346" y="147" width="1" height="1" fill="#20ff00"/>
<rect x="347" y="147" width="1" height="1" fill="#20ff00"/>
<rect x="348" y="147" width="1" height="2" fill="#20ff00"/>
<rect x="349" y="147" width="1" height="2" fill="#20ff00"/>
<rect x="350" y="146" width="1" height="2" fill="#20ff00"/>
<rect x="350" y="147" width="1" height="1" fill="#20ff00"/>
<rect x="351" y="146" width="1" height="2" fill="#20ff00"/>
<rect x="352" y="146" width="1" height="2" fill="#20ff00"/>
<rect x="353" y="146" width="1" height="1" fill="#20ff00"/>
<rect x="354" y="146" width="1" height="1" fill="#20ff00"/>
<rect x="355" y="146" width="1" height="1" fill="#20ff00"/>
<rect x="355" y="147" width="1" height="1" fill="#20ff00"/>
<rect x="356" y="146" width="1" height="1" fill="#20ff00"/>
<rect x="357" y="146" width="1" height="1" fill="#20ff00"/>
<rect x="357" y="147" width="1" height="1" fill="#20ff00"/>
<rect x="358" y="146" width="1" height="1" fill="#20ff00"/>
<rect x="359" y="146" width="1" height="1" fill="#20ff00"/>
<rect x="359" y="147" width="1" height="1" fill="#20ff00"/>
<rect x="360" y="146" width="1" height="1" fill="#20ff00"/>
<rect x="360" y="147" width="1" height="1" fill="#20ff00"/>
<rect x="361" y="146" width="1" height="1" fill="#20ff00"/>
<rect x="362" y="146" width="1" height="1" fill="#20ff00"/>
<rect x="362" y="147" width="1" height="1" fill="#20ff00"/>
<rect x="363" y="146" width="1" height="1" fill="#20ff00"/>
<rect x="364" y="145" width="1" height="2" fill="#20ff00"/>
<rect x="365" y="145" width="1" height="2" fill="#20ff00"/>
<rect x="366" y="145" width="1" height="2" fill="#20ff00"/>
<rect x="367" y="145" width="1" height="1" fill="#20ff00"/>
<rect x="367" y="146" width="1" height="1" fill="#20ff00"/>
<rect x="368" y="145" width="1" height="1" fill="#20ff00"/>
<rect x="369" y="145" width="1" height="1" fill="#20ff00"/>
<rect x="369" y="146" width="1" height="1" fill="#20ff00"/>
<rect x="370" y="145" width="1" height="1" fill="#20ff00"/>
<rect x="370" y="146" width="1" height="1" fill="#20ff00"/>
<rect x="371" y="145" width="1" height="1" fill="#20ff00"/>
<rect x="372" y="145" width="1" height="2" fill="#20ff00"/>
<rect x="373" y="145" width="1" height="2" fill="#20ff00"/>
<rect x="373" y="146" width="1" height="1" fill="#20ff00"/>
<rect x="374" y="145" width="1" height="1" fill="#20ff00"/>
<rect x="375" y="145" width="1" height="1" fill="#20ff00"/>
<rect x="376" y="145" width="1" height="1" fill="#20ff00"/>
<rect x="377" y="144" width="1" height="2" fill="#20ff00"/>
<rect x="377" y="145" width="1" height="1" fill="#20ff00"/>
<rect x="378" y="144" width="1" height="1" fill="#20ff00"/>
<rect x="379" y="144" width="1" height="1" fill="#20ff00"/>
<rect x="379" y="145" width="1" height="1" fill="#20ff00"/>
<rect x="380" y="144" width="1" height="1" fill="#20ff00"/>
<rect x="381" y="144" width="1" height="1" fill="#20ff00"/>
<rect x="382" y="144" width="1" height="1" fill="#20ff00"/>
<rect x="383" y="144" width="1" height="1" fill="#20ff00"/>
<rect x="384" y="144" width="1" height="1" fill="#20ff00"/>
<rect x="385" y="144" width="1" height="1" fill="#20ff00"/>
<rect x="386" y="144" width="1" height="1" fill="#20ff00"/>
<rect x="387" y="144" width="1" height="1" fill="#20ff00"/>
<rect x="388" y="144" width="1" height="1" fill="#20ff00"/>
<rect x="389" y="144" width="1" height="2" fill="#20ff00"/>
<rect x="390" y="144" width="1" height="2" fill="#20ff00"/>
<rect x="391" y="143" width="1" height="2" fill="#20ff00"/>
<rect x="392" y="143" width="1" height="2" fill="#20ff00"/>
<rect x="392" y="144" width="1" height="1" fill="#20ff00"/>
<rect x="393" y="143" width="1" height="2" fill="#20ff00"/>
<rect x="394" y="143" width="1" height="1" fill="#20ff00"/>
<rect x="395" y="143" width="1" height="1" fill="#20ff00"/>
<rect x="395" y="144" width="1" height="1" fill="#20ff00"/>
<rect x="396" y="143" width="1" height="1" fill="#20ff00"/>
<rect x="397" y="143" width="1" height="1" fill="#20ff00"/>
<rect x="398" y="143" width="1" height="1" fill="#20ff00"/>
<rect x="398" y="144" width="1" height="1" fill="#20ff00"/>
<rect x="399" y="143" width="1" height="1" fill="#20ff00"/>
<rect x="400" y="143" width="1" height="1" fill="#20ff00"/>
<rect x="401" y="143" width="1" height="1" fill="#20ff00"/>
<rect x="401" y="144" width="1" height="1" fill="#20ff00"/>
<rect x="402" y="143" width="1" height="1" fill="#20ff00"/>
<rect x="403" y="143" width="1" height="2" fill="#20ff00"/>
<rect x="404" y="143" width="1" height="2" fill="#20ff00"/>
<rect x="405" y="142" width="1" height="2" fill="#20ff00"/>
<rect x="406" y="142" width="1" height="1" fill="#20ff00"/>
<rect x="407" y="142" width="1" height="1" fill="#20ff00"/>
<rect x="408" y="142" width="1" height="1" fill="#20ff00"/>
<rect x="409" y="142" width="1" height="1" fill="#20ff00"/>
<rect x="410" y="142" width="1" height="2" fill="#20ff00"/>
<rect x="411" y="143" width="1" height="1" fill="#20ff00"/>
<rect x="412" y="142" width="1" height="2" fill="#20ff00"/>
<rect x="413" y="142" width="1" height="1" fill="#20ff00"/>
<rect x="414" y="142" width="1" height="1" fill="#20ff00"/>
<rect x="415" y="142" width="1" height="1" fill="#20ff00"/>
<rect x="415" y="143" width="1" height="1" fill="#20ff00"/>
<rect x="416" y="142" width="1" height="1" fill="#20ff00"/>
<rect x="417" y="142" width="1" height="1" fill="#20ff00"/>
<rect x="418" y="142" width="1" height="2" fill="#20ff00"/>
<rect x="418" y="143" width="1" height="1" fill="#20ff00"/>
<rect x="419" y="142" width="1" height="2" fill="#20ff00"/>
<rect x="420" y="141" width="1" height="2" fill="#20ff00"/>
<rect x="421" y="141" width="1" height="1" fill="#20ff00"/>
<rect x="422" y="141" width="1" height="1" fill="#20ff00"/>
<rect x="422" y="142" width="1" height="1" fill="#20ff00"/>
<rect x="423" y="141" width="1" height="1" fill="#20ff00"/>
<rect x="424" y="141" width="1" height="1" fill="#20ff00"/>
<rect x="425" y="141" width="1" height="2" fill="#20ff00"/>
<rect x="426" y="142" width="1" height="1" fill="#20ff00"/>
<rect x="427" y="141" width="1" height="2" fill="#20ff00"/>
<rect x="428" y="141" width="1" height="1" fill="#20ff00"/>
<rect x="428" y="142" width="1" height="1" fill="#20ff00"/>
<rect x="429" y="141" width="1" height="2" fill="#20ff00"/>
<rect x="430" y="141" width="1" height="2" fill="#20ff00"/>
<rect x="431" y="141" width="1" height="1" fill="#20ff00"/>
<rect x="432" y="141" width="1" height="1" fill="#20ff00"/>
<rect x="433" y="141" width="1" height="1" fill="#20ff00"/>
<rect x="434" y="140" width="1" height="2" fill="#20ff00"/>
<rect x="435" y="140" width="1" height="2" fill="#20ff00"/>
<rect x="436" y="140" width="1" height="2" fill="#20ff00"/>
<rect x="437" y="140" width="1" height="1" fill="#20ff00"/>
<rect x="438" y="140" width="1" height="1" fill="#20ff00"/>
<rect x="439" y="140" width="1" height="1" fill="#20ff00"/>
<rect x="440" y="140" width="1" height="1" fill="#20ff00"/>
<rect x="441" y="140" width="1" height="1" fill="#20ff00"/>
<rect x="442" y="140" width="1" height="1" fill="#20ff00"/>
<rect x="442" y="141" width="1" height="1" fill="#20ff00"/>
<rect x="443" y="140" width="1" height="1" fill="#20ff00"/>
<rect x="444" y="140" width="1" height="1" fill="#20ff00"/>
<rect x="445" y="140" width="1" height="1" fill="#20ff00"/>
<rect x="446" y="140" width="1" height="1" fill="#20ff00"/>
<rect x="446" y="141" width="1" height="1" fill="#20ff00"/>
<rect x="447" y="140" width="1" height="1" fill="#20ff00"/>
<rect x="448" y="140" width="1" height="1" fill="#20ff00"/>
<rect x="449" y="139" width="1" height="2" fill="#20ff00"/>
<rect x="450" y="139" width="1" height="1" fill="#20ff00"/>
<rect x="451" y="139" width="1" height="1" fill="#20ff00"/>
<rect x="452" y="139" width="1" height="1" fill="#20ff00"/>
<rect x="452" y="140" width="1" height="1" fill="#20ff00"/>
<rect x="453" y="139" width="1" height="1" fill="#20ff00"/>
<rect x="454" y="139" width="1" height="1" fill="#20ff00"/>
<rect x="455" y="139" width="1" height="1" fill="#20ff00"/>
<rect x="456" y="139" width="1" height="1" fill="#20ff00"/>
<rect x="457" y="139" width="1" height="1" fill="#20ff00"/>
<rect x="458" y="139" width="1" height="1" fill="#20ff00"/>
<rect x="459" y="139" width="1" height="1" fill="#20ff00"/>
<rect x="460" y="139" width="1" height="1" fill="#20ff00"/>
<rect x="461" y="139" width="1" height="1" fill="#20ff00"/>
<rect x="462" y="139" width="1" height="1" fill="#20ff00"/>
<rect x="463" y="139" width="1" height="1" fill="#20ff00"/>
<rect x="464" y="138" width="1" height="2" fill="#20ff00"/>
<rect x="465" y="138" width="1" height="1" fill="#20ff00"/>
<rect x="466" y="138" width="1" height="1" fill="#20ff00"/>
<rect x="467" y="138" width="1" height="1" fill="#20ff00"/>
<rect x="468" y="138" width="1" height="1" fill="#20ff00"/>
<rect x="469" y="138" width="1" height="1" fill="#20ff00"/>
<rect x="470" y="138" width="1" height="1" fill="#20ff00"/>
<rect x="470" y="139" width="1" height="1" fill="#20ff00"/>
<rect x="471" y="138" width="1" height="1" fill="#20ff00"/>
<rect x="472" y="138" width="1" height="1" fill="#20ff00"/>
<rect x="473" y="138" width="1" height="1" fill="#20ff00"/>
<rect x="474" y="138" width="1" height="1" fill="#20ff00"/>
<rect x="474" y="139" width="1" height="1" fill="#20ff00"/>
<rect x="475" y="138" width="1" height="1" fill="#20ff00"/>
<rect x="476" y="138" width="1" height="1" fill="#20ff00"/>
<rect x="477" y="138" width="1" height="1" fill="#20ff00"/>
<rect x="478" y="138" width="1" height="1" fill="#20ff00"/>
<rect x="478" y="139" width="1" height="1" fill="#20ff00"/>
<rect x="479" y="138" width="1" height="1" fill="#20ff00"/>
<rect x="480" y="137" width="1" height="2" fill="#20ff00"/>
<rect x="481" y="137" width="1" height="1" fill="#20ff00"/>
<rect x="481" y="138" width="1" height="1" fill="#20ff00"/>
<rect x="482" y="137" width="1" height="1" fill="#20ff00"/>
<rect x="483" y="137" width="1" height="1" fill="#20ff00"/>
<rect x="484" y="137" width="1" height="1" fill="#20ff00"/>
<rect x="485" y="137" width="1" height="1" fill="#20ff00"/>
<rect x="485" y="138" width="1" height="1" fill="#20ff00"/>
<rect x="486" y="137" width="1" height="1" fill="#20ff00"/>
<rect x="487" y="137" width="1" height="1" fill="#20ff00"/>
<rect x="488" y="137" width="1" height="1" fill="#20ff00"/>
<rect x="489" y="137" width="1" height="1" fill="#20ff00"/>
<rect x="490" y="137" width="1" height="2" fill="#20ff00"/>
<rect x="490" y="138" width="1" height="1" fill="#20ff00"/>
<rect x="491" y="137" width="1" height="2" fill="#20ff00"/>
<rect x="492" y="137" width="1" height="1" fill="#20ff00"/>
<rect x="493" y="137" width="1" height="1" fill="#20ff00"/>
<rect x="494" y="137" width="1" height="1" fill="#20ff00"/>
<rect x="495" y="136" width="1" height="2" fill="#20ff00"/>
<rect x="496" y="136" width="1" height="1" fill="#20ff00"/>
<rect x="497" y="136" width="1" height="1" fill="#20ff00"/>
<rect x="498" y="136" width="1" height="1" fill="#20ff00"/>
<rect x="499" y="136" width="1" height="2" fill="#20ff00"/>
<rect x="499" y="137" width="1" height="1" fill="#20ff00"/>
<rect x="500" y="136" width="1" height="2" fill="#20ff00"/>
<rect x="501" y="136" width="1" height="1" fill="#20ff00"/>
<rect x="502" y="136" width="1" height="1" fill="#20ff00"/>
<rect x="503" y="136" width="1" height="1" fill="#20ff00"/>
<rect x="503" y="137" width="1" height="1" fill="#20ff00"/>
<rect x="504" y="136" width="1" height="1" fill="#20ff00"/>
<rect x="505" y="136" width="1" height="1" fill="#20ff00"/>
<rect x="506" y="136" width="1" height="1" fill="#20ff00"/>
<rect x="507" y="136" width="1" height="1" fill="#20ff00"/>
<rect x="508" y="136" width="1" height="1" fill="#20ff00"/>
<rect x="509" y="136" width="1" height="1" fill="#20ff00"/>
<rect x="510" y="136" width="1" height="1" fill="#20ff00"/>
<rect x="510" y="137" width="1" height="1" fill="#20ff00"/>
<rect x="511" y="135" width="1" height="2" fill="#20ff00"/>
<rect x="511" y="136" width="1" height="1" fill="#20ff00"/>
<rect x="512" y="135" width="1" height="1" fill="#20ff00"/>
<rect x="513" y="135" width="1" height="1" fill="#20ff00"/>
<rect x="514" y="135" width="1" height="1" fill="#20ff00"/>
<rect x="515" y="135" width="1" height="1" fill="#20ff00"/>
<rect x="516" y="135" width="1" height="1" fill="#20ff00"/>
<rect x="74" y="174" width="1" height="27" fill="#20ff00"/>
<rect x="75" y="174" width="1" height="27" fill="#10a000"/>
<rect x="529" y="196" width="2" height="1" fill="#0000ff"/>
<rect x="529" y="188" width="4" height="1" fill="#0000ff"/>
<rect x="529" y="179" width="2" height="1" fill="#0000ff"/>
<rect x="529" y="171" width="4" height="1" fill="#0000ff"/>
<rect x="529" y="163" width="2" height="1" fill="#0000ff"/>
<rect x="529" y="155" width="4" height="1" fill="#0000ff"/>
<rect x="529" y="147" width="2" height="1" fill="#0000ff"/>
<rect x="529" y="138" width="4" height="1" fill="#0000ff"/>
<rect x="529" y="130" width="2" height="1" fill="#0000ff"/>
<rect x="529" y="122" width="4" height="1" fill="#0000ff"/>
<rect x="529" y="114" width="2" height="1" fill="#0000ff"/>
<rect x="529" y="106" width="4" height="1" fill="#0000ff"/>
<rect x="529" y="98" width="2" height="1" fill="#0000ff"/>
<rect x="529" y="89" width="4" height="1" fill="#0000ff"/>
<rect x="529" y="81" width="2" height="1" fill="#0000ff"/>
<rect x="529" y="73" width="4" height="1" fill="#0000ff"/>
<rect x="61" y="223" width="470" height="132" fill="#008000"/>
<rect x="72" y="224" width="1" height="131" fill="#000080"/>
<rect x="82" y="224" width="1" height="131" fill="#000080"/>
<rect x="93" y="224" width="1" height="131" fill="#000080"/>
<rect x="103" y="224" width="1" height="131" fill="#000080"/>
<rect x="113" y="224" width="1" height="131" fill="#0000ff"/>
<rect x="124" y="224" width="1" height="131" fill="#000080"/>
<rect x="134" y="224" width="1" height="131" fill="#000080"/>
<rect x="144" y="224" width="1" height="131" fill="#000080"/>
<rect x="155" y="224" width="1" height="131" fill="#000080"/>
<rect x="165" y="224" width="1" height="131" fill="#0000ff"/>
<rect x="176" y="224" width="1" height="131" fill="#000080"/>
<rect x="186" y="224" width="1" height="131" fill="#000080"/>
<rect x="196" y="224" width="1" height="131" fill="#000080"/>
<rect x="207" y="224" width="1" height="131" fill="#000080"/>
<rect x="217" y="224" width="1" height="131" fill="#0000ff"/>
<rect x="228" y="224" width="1" height="131" fill="#000080"/>
<rect x="238" y="224" width="1" height="131" fill="#000080"/>
<rect x="248" y="224" width="1" height="131" fill="#000080"/>
<rect x="259" y="224" width="1" height="131" fill="#000080"/>
<rect x="269" y="224" width="1" height="131" fill="#0000ff"/>
<rect x="279" y="224" width="1" height="131" fill="#000080"/>
<rect x="290" y="224" width="1" height="131" fill="#000080"/>
<rect x="300" y="224" width="1" height="131" fill="#000080"/>
<rect x="311" y="224" width="1" height="131" fill="#000080"/>
<rect x="321" y="224" width="1" height="131" fill="#0000ff"/>
<rect x="331" y="224" width="1" height="131" fill="#000080"/>
<rect x="342" y="224" width="1" height="131" fill="#000080"/>
<rect x="352" y="224" width="1" height="131" fill="#000080"/>
<rect x="362" y="224" width="1" height="131" fill="#000080"/>
<rect x="373" y="224" width="1" height="131" fill="#0000ff"/>
<rect x="383" y="224" width="1" height="131" fill="#000080"/>
<rect x="394" y="224" width="1" height="131" fill="#000080"/>
<rect x="404" y="224" width="1" height="131" fill="#000080"/>
<rect x="414" y="224" width="1" height="131" fill="#000080"/>
<rect x="425" y="224" width="1" height="131" fill="#0000ff"/>
<rect x="435" y="224" width="1" height="131" fill="#000080"/>
<rect x="446" y="224" width="1" height="131" fill="#000080"/>
<rect x="456" y="224" width="1" height="131" fill="#000080"/>
<rect x="466" y="224" width="1" height="131" fill="#000080"/>
<rect x="477" y="224" width="1" height="131" fill="#0000ff"/>
<rect x="487" y="224" width="1" height="131" fill="#000080"/>
<rect x="497" y="224" width="1" height="131" fill="#000080"/>
<rect x="508" y="224" width="1" height="131" fill="#000080"/>
<rect x="518" y="224" width="1" height="131" fill="#000080"/>
<rect x="59" y="223" width="470" height="1" fill="#0000ff"/>
<rect x="60" y="237" width="469" height="1" fill="#000080"/>
<rect x="59" y="250" width="470" height="1" fill="#0000ff"/>
<rect x="60" y="263" width="469" height="1" fill="#000080"/>
<rect x="59" y="276" width="470" height="1" fill="#0000ff"/>
<rect x="60" y="289" width="469" height="1" fill="#000080"/>
<rect x="59" y="302" width="470" height="1" fill="#0000ff"/>
<rect x="60" y="315" width="469" height="1" fill="#000080"/>
<rect x="59" y="328" width="470" height="1" fill="#0000ff"/>
<rect x="60" y="341" width="469" height="1" fill="#000080"/>
<rect x="59" y="354" width="470" height="1" fill="#0000ff"/>
<rect x="62" y="276" width="1" height="79" fill="#ffff00"/>
<rect x="93" y="341" width="1" height="14" fill="#ffff00"/>
<rect x="114" y="328" width="1" height="27" fill="#ffff00"/>
<rect x="129" y="328" width="1" height="27" fill="#ffff00"/>
<rect x="167" y="328" width="1" height="27" fill="#ffff00"/>
<rect x="181" y="315" width="1" height="40" fill="#ffff00"/>
<rect x="182" y="276" width="1" height="79" fill="#ffff00"/>
<rect x="208" y="315" width="1" height="40" fill="#ffff00"/>
<rect x="213" y="315" width="1" height="40" fill="#ffff00"/>
<rect x="219" y="328" width="1" height="27" fill="#ffff00"/>
<rect x="221" y="315" width="1" height="40" fill="#ffff00"/>
<rect x="231" y="341" width="1" height="14" fill="#ffff00"/>
<rect x="238" y="302" width="1" height="53" fill="#ffff00"/>
<rect x="254" y="302" width="1" height="53" fill="#ffff00"/>
<rect x="271" y="328" width="1" height="27" fill="#ffff00"/>
<rect x="288" y="315" width="1" height="40" fill="#ffff00"/>
<rect x="289" y="302" width="1" height="53" fill="#ffff00"/>
<rect x="324" y="341" width="1" height="14" fill="#ffff00"/>
<rect x="335" y="315" width="1" height="40" fill="#ffff00"/>
<rect x="336" y="315" width="1" height="40" fill="#ffff00"/>
<rect x="346" y="328" width="1" height="27" fill="#ffff00"/>
<rect x="348" y="341" width="1" height="14" fill="#ffff00"/>
<rect x="349" y="341" width="1" height="14" fill="#ffff00"/>
<rect x="387" y="328" width="1" height="27" fill="#ffff00"/>
<rect x="396" y="328" width="1" height="27" fill="#ffff00"/>
<rect x="407" y="328" width="1" height="27" fill="#ffff00"/>
<rect x="410" y="328" width="1" height="27" fill="#ffff00"/>
<rect x="411" y="341" width="1" height="14" fill="#ffff00"/>
<rect x="412" y="328" width="1" height="27" fill="#ffff00"/>
<rect x="413" y="328" width="1" height="27" fill="#ffff00"/>
<rect x="417" y="328" width="1" height="27" fill="#ffff00"/>
<rect x="431" y="328" width="1" height="27" fill="#ffff00"/>
<rect x="432" y="341" width="1" height="14" fill="#ffff00"/>
<rect x="439" y="328" width="1" height="27" fill="#ffff00"/>
<rect x="441" y="328" width="1" height="27" fill="#ffff00"/>
<rect x="443" y="328" width="1" height="27" fill="#ffff00"/>
<rect x="445" y="328" width="1" height="27" fill="#ffff00"/>
<rect x="449" y="341" width="1" height="14" fill="#ffff00"/>
<rect x="450" y="341" width="1" height="14" fill="#ffff00"/>
<rect x="451" y="341" width="1" height="14" fill="#ffff00"/>
<rect x="453" y="341" width="1" height="14" fill="#ffff00"/>
<rect x="454" y="341" width="1" height="14" fill="#ffff00"/>
<rect x="456" y="341" width="1" height="14" fill="#ffff00"/>
<rect x="457" y="341" width="1" height="14" fill="#ffff00"/>
<rect x="458" y="328" width="1" height="27" fill="#ffff00"/>
<rect x="459" y="328" width="1" height="27" fill="#ffff00"/>
<rect x="460" y="302" width="1" height="53" fill="#ffff00"/>
<rect x="461" y="328" width="1" height="27" fill="#ffff00"/>
<rect x="462" y="328" width="1" height="27" fill="#ffff00"/>
<rect x="463" y="315" width="1" height="40" fill="#ffff00"/>
<rect x="464" y="328" width="1" height="27" fill="#ffff00"/>
<rect x="465" y="328" width="1" height="27" fill="#ffff00"/>
<rect x="466" y="315" width="1" height="40" fill="#ffff00"/>
<rect x="467" y="315" width="1" height="40" fill="#ffff00"/>
<rect x="468" y="315" width="1" height="40" fill="#ffff00"/>
<rect x="469" y="302" width="1" height="53" fill="#ffff00"/>
<rect x="470" y="315" width="1" height="40" fill="#ffff00"/>
<rect x="471" y="263" width="1" height="92" fill="#ffff00"/>
<rect x="472" y="289" width="1" height="66" fill="#ffff00"/>
<rect x="473" y="315" width="1" height="40" fill="#ffff00"/>
<rect x="474" y="276" width="1" height="79" fill="#ffff00"/>
<rect x="475" y="289" width="1" height="66" fill="#ffff00"/>
<rect x="476" y="302" width="1" height="53" fill="#ffff00"/>
<rect x="477" y="263" width="1" height="92" fill="#ffff00"/>
<rect x="478" y="302" width="1" height="53" fill="#ffff00"/>
<rect x="479" y="289" width="1" height="66" fill="#ffff00"/>
<rect x="480" y="263" width="1" height="92" fill="#ffff00"/>
<rect x="481" y="276" width="1" height="79" fill="#ffff00"/>
<rect x="482" y="302" width="1" height="53" fill="#ffff00"/>
<rect x="483" y="250" width="1" height="105" fill="#ffff00"/>
<rect x="484" y="289" width="1" height="66" fill="#ffff00"/>
<rect x="485" y="250" width="1" height="105" fill="#ffff00"/>
<rect x="486" y="302" width="1" height="53" fill="#ffff00"/>
<rect x="487" y="250" width="1" height="105" fill="#ffff00"/>
<rect x="488" y="289" width="1" height="66" fill="#ffff00"/>
<rect x="489" y="315" width="1" height="40" fill="#ffff00"/>
<rect x="490" y="250" width="1" height="105" fill="#ffff00"/>
<rect x="491" y="289" width="1" height="66" fill="#ffff00"/>
<rect x="492" y="315" width="1" height="40" fill="#ffff00"/>
<rect x="493" y="276" width="1" height="79" fill="#ffff00"/>
<rect x="494" y="315" width="1" height="40" fill="#ffff00"/>
<rect x="495" y="302" width="1" height="53" fill="#ffff00"/>
<rect x="496" y="315" width="1" height="40" fill="#ffff00"/>
<rect x="497" y="289" width="1" height="66" fill="#ffff00"/>
<rect x="498" y="315" width="1" height="40" fill="#ffff00"/>
<rect x="499" y="263" width="1" height="92" fill="#ffff00"/>
<rect x="500" y="263" width="1" height="92" fill="#ffff00"/>
<rect x="501" y="263" width="1" height="92" fill="#ffff00"/>
<rect x="502" y="315" width="1" height="40" fill="#ffff00"/>
<rect x="503" y="302" width="1" height="53" fill="#ffff00"/>
<rect x="504" y="328" width="1" height="27" fill="#ffff00"/>
<rect x="505" y="289" width="1" height="66" fill="#ffff00"/>
<rect x="506" y="315" width="1" height="40" fill="#ffff00"/>
<rect x="507" y="302" width="1" height="53" fill="#ffff00"/>
<rect x="508" y="315" width="1" height="40" fill="#ffff00"/>
<rect x="509" y="315" width="1" height="40" fill="#ffff00"/>
<rect x="510" y="250" width="1" height="105" fill="#ffff00"/>
<rect x="511" y="328" width="1" height="27" fill="#ffff00"/>
<rect x="512" y="302" width="1" height="53" fill="#ffff00"/>
<rect x="513" y="315" width="1" height="40" fill="#ffff00"/>
<rect x="514" y="302" width="1" height="53" fill="#ffff00"/>
<rect x="515" y="302" width="1" height="53" fill="#ffff00"/>
<rect x="516" y="302" width="1" height="53" fill="#ffff00"/>
<path d="M62.5,285 L63.5,289 L64.5,291 L65.5,291 L66.5,292 L67.5,290 L68.5,289 L69.5,290 L70.5,291 L71.5,291 L72.5,291 L73.5,289 L74.5,291 L75.5,291 L76.5,290 L77.5,293 L78.5,293 L79.5,291 L80.5,291 L81.5,291 L82.5,293 L83.5,291 L84.5,292 L85.5,291 L86.5,289 L87.5,292 L88.5,293 L89.5,290 L90.5,292 L91.5,291 L92.5,290 L93.5,288 L94.5,290 L95.5,289 L96.5,292 L97.5,290 L98.5,289 L99.5,290 L100.5,290 L101.5,291 L102.5,289 L103.5,288 L104.5,289 L105.5,289 L106.5,288 L107.5,288 L108.5,288 L109.5,286 L110.5,287 L111.5,289 L112.5,286 L113.5,286 L114.5,284 L115.5,287 L116.5,285 L117.5,284 L118.5,286 L119.5,284 L120.5,284 L121.5,286 L122.5,283 L123.5,284 L124.5,281 L125.5,282 L126.5,280 L127.5,282 L128.5,281 L129.5,280 L130.5,283 L131.5,280 L132.5,282 L133.5,283 L134.5,280 L135.5,283 L136.5,281 L137.5,282 L138.5,284 L139.5,283 L140.5,283 L141.5,283 L142.5,282 L143.5,283 L144.5,284 L145.5,286 L146.5,283 L147.5,288 L148.5,286 L149.5,287 L150.5,286 L151.5,285 L152.5,290 L153.5,288 L154.5,289 L155.5,288 L156.5,290 L157.5,289 L158.5,289 L159.5,289 L160.5,288 L161.5,289 L162.5,289 L163.5,289 L164.5,287 L165.5,288 L166.5,288 L167.5,288 L168.5,288 L169.5,290 L170.5,291 L171.5,290 L172.5,289 L173.5,287 L174.5,288 L175.5,288 L176.5,290 L177.5,288 L178.5,289 L179.5,291 L180.5,289 L181.5,289 L182.5,287 L183.5,291 L184.5,289 L185.5,290 L186.5,292 L187.5,290 L188.5,288 L189.5,289 L190.5,290 L191.5,288 L192.5,289 L193.5,291 L194.5,290 L195.5,292 L196.5,290 L197.5,290 L198.5,290 L199.5,291 L200.5,289 L201.5,290 L202.5,290 L203.5,288 L204.5,290 L205.5,288 L206.5,290 L207.5,290 L208.5,291 L209.5,289 L210.5,290 L211.5,289 L212.5,291 L213.5,289 L214.5,291 L215.5,288 L216.5,291 L217.5,291 L218.5,288 L219.5,290 L220.5,290 L221.5,290 L222.5,289 L223.5,289 L224.5,287 L225.5,287 L226.5,284 L227.5,286 L228.5,286 L229.5,287 L230.5,286 L231.5,284 L232.5,285 L233.5,285 L234.5,287 L235.5,285 L236.5,285 L237.5,287 L238.5,284 L239.5,287 L240.5,286 L241.5,285 L242.5,286 L243.5,287 L244.5,285 L245.5,284 L246.5,283 L247.5,286 L248.5,283 L249.5,286 L250.5,287 L251.5,287 L252.5,283 L253.5,285 L254.5,283 L255.5,283 L256.5,286 L257.5,283 L258.5,284 L259.5,284 L260.5,284 L261.5,284 L262.5,283 L263.5,282 L264.5,286 L265.5,286 L266.5,282 L267.5,283 L268.5,282 L269.5,284 L270.5,286 L271.5,283 L272.5,287 L273.5,286 L274.5,286 L275.5,281 L276.5,284 L277.5,285 L278.5,287 L279.5,282 L280.5,281 L281.5,285 L282.5,287 L283.5,284 L284.5,285 L285.5,284 L286.5,282 L287.5,287 L288.5,281 L289.5,284 L290.5,282 L291.5,284 L292.5,282 L293.5,281 L294.5,287 L295.5,284 L296.5,281 L297.5,285 L298.5,285 L299.5,281 L300.5,282 L301.5,284 L302.5,284 L303.5,284 L304.5,282 L305.5,287 L306.5,284 L307.5,282 L308.5,285 L309.5,282 L310.5,284 L311.5,281 L312.5,285 L313.5,284 L314.5,285 L315.5,287 L316.5,285 L317.5,285 L318.5,285 L319.5,284 L320.5,282 L321.5,281 L322.5,285 L323.5,282 L324.5,281 L325.5,281 L326.5,281 L327.5,284 L328.5,284 L329.5,281 L330.5,284 L331.5,281 L332.5,282 L333.5,282 L334.5,287 L335.5,285 L336.5,285 L337.5,285 L338.5,287 L339.5,281 L340.5,281 L341.5,284 L342.5,281 L343.5,282 L344.5,284 L345.5,282 L346.5,284 L347.5,284 L348.5,284 L349.5,282 L350.5,284 L351.5,283 L352.5,280 L353.5,282 L354.5,283 L355.5,280 L356.5,285 L357.5,283 L358.5,285 L359.5,286 L360.5,283 L361.5,284 L362.5,286 L363.5,283 L364.5,283 L365.5,286 L366.5,281 L367.5,283 L368.5,281 L369.5,281 L370.5,281 L371.5,281 L372.5,282 L373.5,282 L374.5,282 L375.5,281 L376.5,282 L377.5,281 L378.5,281 L379.5,285 L380.5,285 L381.5,283 L382.5,282 L383.5,283 L384.5,283 L385.5,283 L386.5,282 L387.5,283 L388.5,278 L389.5,280 L390.5,281 L391.5,280 L392.5,278 L393.5,281 L394.5,282 L395.5,281 L396.5,284 L397.5,284 L398.5,279 L399.5,283 L400.5,274 L401.5,277 L402.5,283 L403.5,274 L404.5,274 L405.5,286 L406.5,283 L407.5,277 L408.5,280 L409.5,277 L410.5,274 L411.5,279 L412.5,282 L413.5,276 L414.5,279 L415.5,285 L416.5,279 L417.5,273 L418.5,273 L419.5,279 L420.5,276 L421.5,279 L422.5,285 L423.5,276 L424.5,279 L425.5,276 L426.5,279 L427.5,279 L428.5,282 L429.5,282 L430.5,285 L431.5,273 L432.5,279 L433.5,276 L434.5,276 L435.5,279 L436.5,276 L437.5,279 L438.5,276 L439.5,279 L440.5,277 L441.5,277 L442.5,276 L443.5,277 L444.5,277 L445.5,279 L446.5,277 L447.5,279 L448.5,279 L449.5,277 L450.5,277 L451.5,277 L452.5,282 L453.5,279 L454.5,276 L455.5,277 L456.5,277 L457.5,277 L458.5,282 L459.5,282 L460.5,277 L461.5,282 L462.5,282 L463.5,279 L464.5,279 L465.5,279 L466.5,282 L467.5,276 L468.5,279 L469.5,278 L470.5,276 L471.5,278 L472.5,282 L473.5,279 L474.5,283 L475.5,277 L476.5,277 L477.5,280 L478.5,280 L479.5,278 L480.5,281 L481.5,277 L482.5,280 L483.5,281 L484.5,281 L485.5,282 L486.5,281 L487.5,280 L488.5,281 L489.5,279 L490.5,276 L491.5,276 L492.5,282 L493.5,277 L494.5,276 L495.5,276 L496.5,278 L497.5,281 L498.5,280 L499.5,276 L500.5,276 L501.5,278 L502.5,280 L503.5,279 L504.5,274 L505.5,277 L506.5,276 L507.5,278 L508.5,276 L509.5,275 L510.5,276 L511.5,274 L512.5,274 L513.5,270 L514.5,271 L515.5,270 " fill="none" stroke="#ff00ff" stroke-width="2" stroke-linejoin="miter"/>
<rect x="516" y="224" width="1" height="78" fill="#c0c0c0"/>
<text x="54" y="76.8" text-anchor="end" class="ax">100</text>
<text x="54" y="103.8" text-anchor="end" class="ax">80</text>
<text x="54" y="129.8" text-anchor="end" class="ax">60</text>
<text x="54" y="155.8" text-anchor="end" class="ax">40</text>
<text x="54" y="181.8" text-anchor="end" class="ax">20</text>
<text x="54" y="226.8" text-anchor="end" class="ax">10</text>
<text x="54" y="253.8" text-anchor="end" class="ax">8</text>
<text x="54" y="279.8" text-anchor="end" class="ax">6</text>
<text x="54" y="305.8" text-anchor="end" class="ax">4</text>
<text x="54" y="331.8" text-anchor="end" class="ax">2</text>
<text x="62.0" y="217" text-anchor="middle" class="ax">0.0</text>
<text x="62.0" y="367" text-anchor="middle" class="ax">0.0</text>
<text x="114.0" y="217" text-anchor="middle" class="ax">0.5</text>
<text x="114.0" y="367" text-anchor="middle" class="ax">0.5</text>
<text x="166.0" y="217" text-anchor="middle" class="ax">1.0</text>
<text x="166.0" y="367" text-anchor="middle" class="ax">1.0</text>
<text x="218.0" y="217" text-anchor="middle" class="ax">1.5</text>
<text x="218.0" y="367" text-anchor="middle" class="ax">1.5</text>
<text x="270.0" y="217" text-anchor="middle" class="ax">2.0</text>
<text x="270.0" y="367" text-anchor="middle" class="ax">2.0</text>
<text x="322.0" y="217" text-anchor="middle" class="ax">2.5</text>
<text x="322.0" y="367" text-anchor="middle" class="ax">2.5</text>
<text x="374.0" y="217" text-anchor="middle" class="ax">3.0</text>
<text x="374.0" y="367" text-anchor="middle" class="ax">3.0</text>
<text x="426.0" y="217" text-anchor="middle" class="ax">3.5</text>
<text x="426.0" y="367" text-anchor="middle" class="ax">3.5</text>
<text x="478.0" y="217" text-anchor="middle" class="ax">4.0</text>
<text x="478.0" y="367" text-anchor="middle" class="ax">4.0</text>
<text x="530.0" y="217" text-anchor="middle" class="ax">4.5</text>
<text x="530.0" y="367" text-anchor="middle" class="ax">4.5</text>
<text x="532.3" y="191.8" text-anchor="start" class="ax">2</text>
<text x="532.3" y="174.8" text-anchor="start" class="ax">4</text>
<text x="532.3" y="158.8" text-anchor="start" class="ax">6</text>
<text x="532.3" y="141.8" text-anchor="start" class="ax">8</text>
<text x="532.3" y="125.8" text-anchor="start" class="ax">10</text>
<text x="532.3" y="109.8" text-anchor="start" class="ax">12</text>
<text x="532.3" y="92.8" text-anchor="start" class="ax">14</text>
<text x="532.3" y="76.8" text-anchor="start" class="ax">16</text>
<text x="532.3" y="331.8" text-anchor="start" class="ax">4</text>
<text x="532.3" y="305.8" text-anchor="start" class="ax">8</text>
<text x="532.3" y="278.8" text-anchor="start" class="ax">12</text>
<text x="532.3" y="252.8" text-anchor="start" class="ax">16</text>
<text x="532.3" y="226.8" text-anchor="start" class="ax">20</text></svg>
<!-- buttons -->
<div class="btn" style="left:562px;top:59px;width:68px;height:19px"><i></i><span>開始</span></div>
<div class="btn" style="left:654px;top:59px;width:68px;height:19px"><i></i><span>終了<span style="letter-spacing:-1px">(<u>X</u>)</span></span>
<div class="a" style="left:1px;top:1px;right:1px;bottom:1px;border:1px dotted #555;border-top-color:#c00000;border-bottom-color:#b0a000"></div></div>
<!-- disc info -->
<div class="gb" style="left:561px;top:92px;width:162px;height:75px"></div>
<div class="lab bl" style="left:567px;top:86px;padding:0 2px"><span class="k" style="margin-right:-13px">ディスク</span>情報</div>
<div class="t" style="left:569px;top:100px"><span class="k">タイプ:</span></div>
<div class="t v" style="left:617px;top:100px">DVD-R</div>
<div class="t l" style="left:569px;top:115px">ID:</div>
<div class="t" style="left:569px;top:130px">日付:</div>
<div class="t v" style="left:617px;top:130px">7 February 2005</div>
<div class="t l" style="left:569px;top:145px">Label:</div>
<div class="t v" style="left:617px;top:145px;letter-spacing:-1.3px">CDS_TEST_B2</div>
<!-- settings -->
<div class="gb" style="left:561px;top:173px;width:162px;height:167px"></div>
<div class="lab bl l" style="left:567px;top:168px;padding:0 2px;letter-spacing:-0.3px">Settings</div>
<div class="t" style="left:569px;top:187px">転送速度</div>
<div class="a" style="left:631px;top:185px;width:82px;height:20px;box-sizing:border-box;border:1px solid #808080;background:#fff"></div>
<div class="t" style="left:634px;top:188px">最大</div>
<div class="a" style="left:695px;top:186px;width:17px;height:18px;box-sizing:border-box;border:1px solid #808080;border-radius:2px;background:linear-gradient(#fff 0,#fff 45%,#c0c0c0 45%,#c0c0c0 100%)"></div>
<svg class="a" style="left:695px;top:186px" width="17" height="18" viewBox="0 0 17 18"><path d="M5 6.5L8.7 10L12.4 6.5" stroke="#000" stroke-width="2.2" fill="none"/></svg>
<div class="t" style="left:569px;top:213px">開始</div>
<div class="inp" style="left:631px;top:209px;width:70px;height:18px">0000 MB</div>
<div class="t" style="left:569px;top:236px">終了位置</div>
<div class="inp" style="left:631px;top:232px;width:70px;height:18px">4489 MB</div>
<div class="cb" style="left:569px;top:255px"><svg width="9" height="9" viewBox="0 0 9 9"><path d="M1 4L3.5 6.5L8 1.5" stroke="#008000" stroke-width="2.4" fill="none"/></svg></div>
<div class="t l" style="left:585px;top:255px;letter-spacing:-0.8px">Show C1/PIE</div>
<div class="cb" style="left:569px;top:272px"><svg width="9" height="9" viewBox="0 0 9 9"><path d="M1 4L3.5 6.5L8 1.5" stroke="#008000" stroke-width="2.4" fill="none"/></svg></div>
<div class="t l" style="left:585px;top:272px;letter-spacing:-0.8px">Show C2/PIF</div>
<div class="cb" style="left:569px;top:288px"><svg width="9" height="9" viewBox="0 0 9 9"><path d="M1 4L3.5 6.5L8 1.5" stroke="#008000" stroke-width="2.4" fill="none"/></svg></div>
<div class="t l" style="left:585px;top:288px;letter-spacing:-0.3px">Show Jitter</div>
<div class="cb" style="left:569px;top:305px"><svg width="9" height="9" viewBox="0 0 9 9"><path d="M1 4L3.5 6.5L8 1.5" stroke="#008000" stroke-width="2.4" fill="none"/></svg></div>
<div class="t l" style="left:585px;top:305px;letter-spacing:-0.8px">Show Read Speed</div>
<div class="cb" style="left:569px;top:321px"><svg width="9" height="9" viewBox="0 0 9 9"><path d="M1 4L3.5 6.5L8 1.5" stroke="#008000" stroke-width="2.4" fill="none"/></svg></div>
<div class="t l" style="left:585px;top:321px;letter-spacing:-0.8px">Show Write Speed</div>
<!-- quality -->
<div class="gb" style="left:561px;top:345px;width:162px;height:23px"></div>
<div class="t" style="left:569px;top:349px">品質<span class="k" style="margin-right:-10px">スコア:</span></div>
<div class="t v r" style="left:640px;width:67px;top:349px">95</div>
<!-- progress -->
<div class="gb" style="left:561px;top:374px;width:162px;height:63px"></div>
<div class="t" style="left:569px;top:381px">進行状況:</div>
<div class="t v r" style="left:640px;width:68px;top:381px">100 <span class="pc">%</span></div>
<div class="t" style="left:569px;top:400px"><span class="k">ポジション:</span></div>
<div class="t v r" style="left:640px;width:68px;top:400px">4488 MB</div>
<div class="t" style="left:569px;top:418px">速度:</div>
<div class="t v r" style="left:640px;width:68px;top:418px">8.37 X</div>
<!-- stats -->
<div class="sb" style="left:18px;top:374px;width:170px;height:63px"></div>
<div class="lab" style="left:28px;top:369px;width:62px"></div>
<div class="sq" style="left:28px;top:371px;background:#00ffff"></div>
<div class="t l" style="left:40px;top:367px">PI Errors</div>
<div class="t" style="left:27px;top:381px">平均:</div><div class="t v r" style="left:100px;width:75px;top:381px">9.29</div>
<div class="t" style="left:27px;top:400px">最大:</div><div class="t v r" style="left:100px;width:75px;top:400px">52</div>
<div class="t" style="left:27px;top:418px">合計 :</div><div class="t v r" style="left:100px;width:75px;top:418px">118610</div>

<div class="sb" style="left:198px;top:374px;width:170px;height:63px"></div>
<div class="lab" style="left:208px;top:369px;width:71px"></div>
<div class="sq" style="left:208px;top:371px;background:#ffff00"></div>
<div class="t l" style="left:220px;top:367px">PI Failures</div>
<div class="t" style="left:209px;top:381px">平均:</div><div class="t v r" style="left:282px;width:75px;top:381px">0.28</div>
<div class="t" style="left:209px;top:400px">最大:</div><div class="t v r" style="left:282px;width:75px;top:400px">8</div>
<div class="t" style="left:209px;top:418px">合計 :</div><div class="t v r" style="left:282px;width:75px;top:418px">2623</div>

<div class="sb" style="left:379px;top:374px;width:170px;height:47px"></div>
<div class="lab" style="left:389px;top:369px;width:39px"></div>
<div class="sq" style="left:389px;top:371px;background:#ff00ff"></div>
<div class="t l" style="left:402px;top:367px">Jitter</div>
<div class="t" style="left:389px;top:381px">平均:</div><div class="t v r" style="left:463px;width:75px;top:381px">10.36 <span class="pc">%</span></div>
<div class="t" style="left:389px;top:400px">最大:</div><div class="t v r" style="left:463px;width:75px;top:400px">12.9 <span class="pc">%</span></div>
<div class="t l" style="left:389px;top:423px">PO Failures:</div><div class="t v r" style="left:463px;width:74px;top:423px">0</div>
</body>
</html>
